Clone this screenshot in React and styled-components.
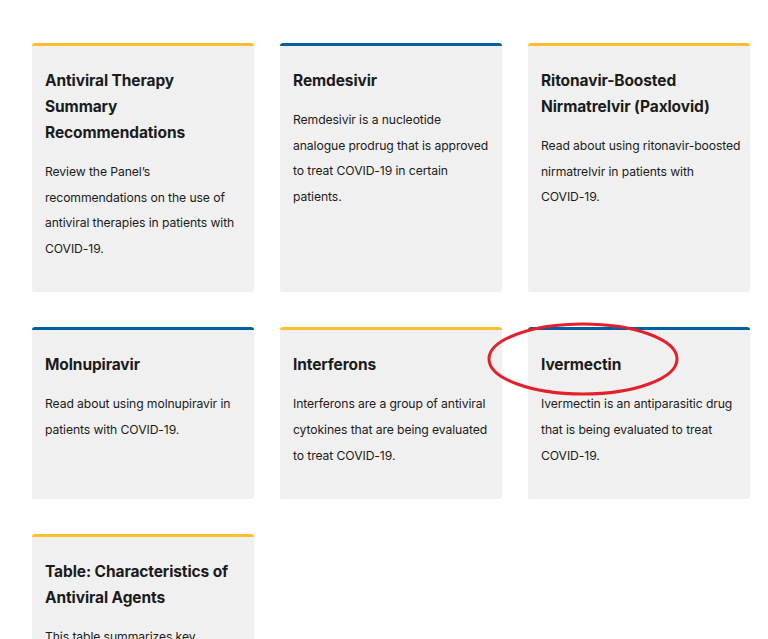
import { Fragment } from 'react';
import styled, { createGlobalStyle } from 'styled-components';

const GlobalStyle = createGlobalStyle`
  html, body {
    margin: 0;
    padding: 0;
    background: #ffffff;
  }

  body {
    font-family: Inter, "Noto Sans", "Liberation Sans", sans-serif;
    color: #1b1b1b;
  }
`;

const Page = styled.main`
  position: relative;
  padding: 43px 18px 0 32px;
`;

const Grid = styled.div`
  display: grid;
  grid-template-columns: repeat(3, 222px);
  column-gap: 26px;
  row-gap: 35px;
`;

const Card = styled.a`
  background: #f0f0f0;
  border-top: 3px solid ${({ $accent }) => ($accent === 'blue' ? '#005ea2' : '#ffbe2e')};
  border-radius: 3px;
  color: #1b1b1b;
  display: block;
  padding: 22px 6px 31px 13px;
  text-decoration: none;

  h3 {
    font-size: 15.5px;
    font-weight: 700;
    letter-spacing: -0.1px;
    line-height: 26px;
    margin: 0 7px 13px 0;
  }

  p {
    font-size: 12.2px;
    letter-spacing: -0.1px;
    line-height: 25.6px;
    margin: 0;
  }
`;

const Term = styled.span`
  white-space: nowrap;
`;

const Annotation = styled.svg`
  left: 486px;
  pointer-events: none;
  position: absolute;
  top: 321px;
`;

const cards = [
  {
    accent: 'yellow',
    title: 'Antiviral Therapy Summary Recommendations',
    text: "Review the Panel\u2019s recommendations on the use of antiviral therapies in patients with COVID-19.",
  },
  {
    accent: 'blue',
    title: 'Remdesivir',
    text: 'Remdesivir is a nucleotide analogue prodrug that is approved to treat COVID-19 in certain patients.',
  },
  {
    accent: 'yellow',
    title: 'Ritonavir-Boosted Nirmatrelvir (Paxlovid)',
    text: 'Read about using ritonavir-boosted nirmatrelvir in patients with COVID-19.',
  },
  {
    accent: 'blue',
    title: 'Molnupiravir',
    text: 'Read about using molnupiravir in patients with COVID-19.',
  },
  {
    accent: 'yellow',
    title: 'Interferons',
    text: 'Interferons are a group of antiviral cytokines that are being evaluated to treat COVID-19.',
  },
  {
    accent: 'blue',
    title: 'Ivermectin',
    text: 'Ivermectin is an antiparasitic drug that is being evaluated to treat COVID-19.',
  },
  {
    accent: 'yellow',
    title: 'Table: Characteristics of Antiviral Agents',
    text: 'This table summarizes key characteristics of the antiviral agents.',
  },
];

// keep "COVID-19" from breaking at its hyphen
function renderText(text) {
  return text.split('COVID-19').map((part, i) => (
    <Fragment key={i}>
      {i > 0 && <Term>COVID-19</Term>}
      {part}
    </Fragment>
  ));
}

export default function App() {
  return (
    <Page>
      <GlobalStyle />
      <Grid>
        {cards.map((card) => (
          <Card key={card.title} href="#" $accent={card.accent}>
            <h3>{card.title}</h3>
            <p>{renderText(card.text)}</p>
          </Card>
        ))}
      </Grid>
      <Annotation width="196" height="78" viewBox="0 0 196 78" aria-hidden="true">
        <ellipse cx="97" cy="38" rx="94" ry="35" fill="none" stroke="#e3202b" strokeWidth="3" />
      </Annotation>
    </Page>
  );
}
